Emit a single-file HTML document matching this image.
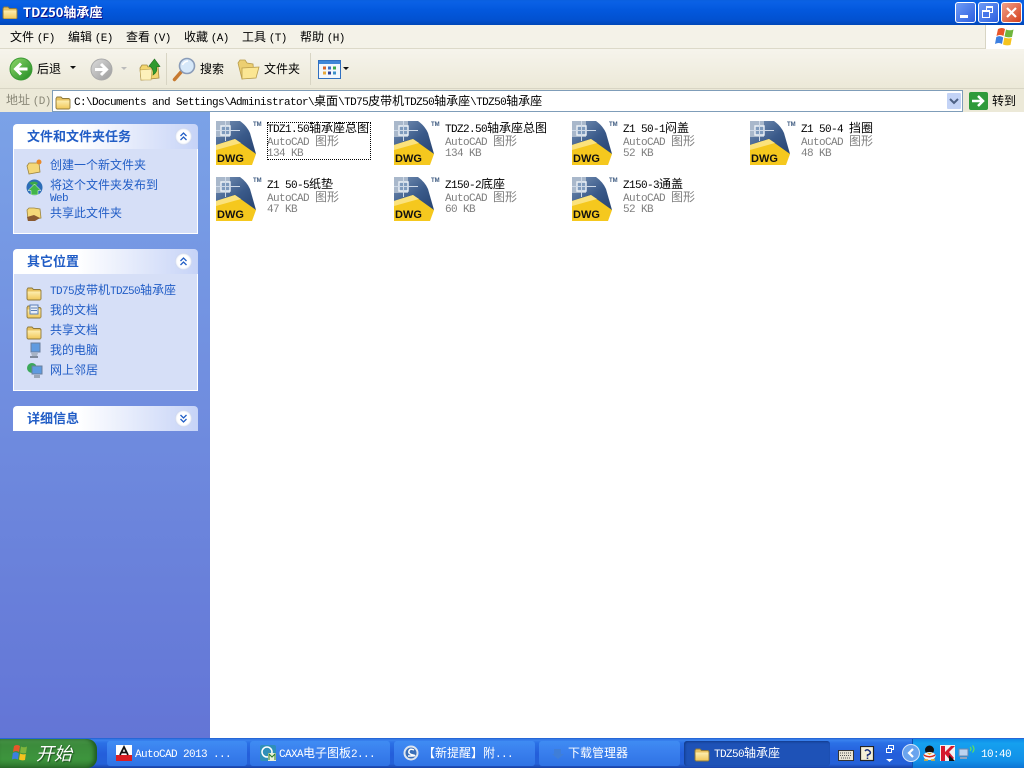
<!DOCTYPE html>
<html lang="zh"><head><meta charset="utf-8"><title>TDZ50轴承座</title>
<style>
html,body{margin:0;padding:0;width:1024px;height:768px;overflow:hidden;background:#fff}
body{position:relative;font:12px/14px "Noto Sans CJK SC","WenQuanYi Zen Hei",sans-serif;color:#000}
div,svg,span.a{position:absolute}
.t{white-space:nowrap;line-height:14px}
i{font:normal 11px/14px "Liberation Mono",monospace;letter-spacing:-.6px}
.title{left:0;top:0;width:1024px;height:25px;background:linear-gradient(#0a5fe0 0,#0a61e6 2px,#0358dd 10px,#0251d0 20px,#0047b8 25px)}
.menu{left:0;top:25px;width:1024px;height:24px;background:#f4f2e8;border-bottom:1px solid #dcd9c9;box-sizing:border-box}
.tool{left:0;top:49px;width:1024px;height:40px;background:linear-gradient(#f6f4ec,#ece9d8);border-bottom:1px solid #d8d5c4;box-sizing:border-box}
.addr{left:0;top:89px;width:1024px;height:23px;background:#ece9d8}
.side{left:0;top:112px;width:210px;height:626px;background:linear-gradient(#7ba2e7,#6375d6)}
.hd{left:13px;width:185px;height:25px;background:linear-gradient(90deg,#fff 0,#fff 35%,#c6d3f7 100%);border-radius:4px 4px 0 0}
.hd b{position:absolute;left:14px;top:4px;font-weight:700;font-size:13px;line-height:15px;color:#215dc6;white-space:nowrap}
.bd{left:13px;width:183px;background:#d6dff7;border:1px solid #fff;border-top:0}
.ch{left:162px;top:4px;width:17px;height:17px;background:#fff;border-radius:50%;box-shadow:0 0 2px #8aa0d8 inset}
.lnk{color:#215dc6;left:50px}
.n{color:#000}.g{color:#7f7f7f}
.task{left:0;top:738px;width:1024px;height:30px;background:linear-gradient(#1f5ed0 0,#3a82ee 2px,#2b70e6 5px,#245edb 16px,#2461d8 26px,#1941a5 30px)}
.tb{top:741px;height:25px;background:linear-gradient(#3f8cf3,#3a80ee 40%,#2f73e4);border-radius:3px;color:#fff}
.tb .t{position:absolute;top:5px;color:#fff}
.wb{top:2px;width:21px;height:21px;border:1px solid #fff;border-radius:3px;box-sizing:border-box}
.dw{position:absolute;left:1px;top:33px;font:700 11px/11px "Liberation Sans",sans-serif;color:#111}
.tm{position:absolute;left:37px;top:1px;font:700 6px/7px "Liberation Sans",sans-serif;color:#3d5a80}
.ic{width:52px;height:48px}
</style></head><body>

<svg width="0" height="0" style="left:0;top:0"><defs>
<linearGradient id="fg" x1="0" y1="0" x2="0" y2="1"><stop offset="0" stop-color="#fdeeb0"/><stop offset="1" stop-color="#f1c95c"/></linearGradient>
<linearGradient id="bl" x1="0" y1="0" x2="1" y2="1"><stop offset="0" stop-color="#7a94b6"/><stop offset=".55" stop-color="#3a5a8a"/><stop offset="1" stop-color="#27436f"/></linearGradient>
<symbol id="dwg" viewBox="0 0 42 45"><path d="M0 0H24Q31 5 34 12L40 33 0 30z" fill="url(#bl)"/><path d="M0 0h14v16H0z" fill="#a9b8cb"/><path d="M5 5h9v9H5z" fill="#7f9bbd" stroke="#eef3f8" stroke-width="1.400"/><path d="M9.500 0v20M0 9.500h24" stroke="#cfdae8" stroke-width="1"/><path d="M0 24 19 18 40 33 36 44H0z" fill="#f5c81e"/><path d="M0 24 19 18 25 22 0 29z" fill="#fbe27c"/></symbol>
<symbol id="fd" viewBox="0 0 16 16"><path d="M1 4.500 2 3h4l1.500 1.500H14l1 1V14l-1 1H2l-1-1z" fill="#e8c261" stroke="#8f7a3c" stroke-width=".9"/><path d="M1.500 6.500H14.500V14.500H2z" fill="url(#fg)"/></symbol>
</defs></svg>

<div class="title"></div>
<svg style="left:2px;top:5px" width="16" height="14"><use href="#fd" width="16" height="16" y="-1"/></svg>
<div class="t" style="left:23px;top:4px;color:#fff;font-weight:700;font-size:13px;line-height:15px;text-shadow:1px 1px #0f1089">TDZ50轴承座</div>
<div class="wb" style="left:955px;background:linear-gradient(135deg,#6f9bf5,#2c5fe0)"><div style="left:4px;top:12px;width:8px;height:3px;background:#fff"></div></div>
<div class="wb" style="left:978px;background:linear-gradient(135deg,#6f9bf5,#2c5fe0)"><div style="left:7px;top:3px;width:7px;height:7px;border:1px solid #fff;border-top-width:2px;box-sizing:border-box"></div><div style="left:3px;top:7px;width:8px;height:8px;border:1px solid #fff;border-top-width:2px;box-sizing:border-box;background:#4676ea"></div></div>
<div class="wb" style="left:1001px;background:linear-gradient(135deg,#f0a08a,#d5401c)"><svg style="left:3px;top:3px" width="13" height="13"><path d="M2 2 11 11M11 2 2 11" stroke="#fff" stroke-width="2.200"/></svg></div>

<div class="menu"></div>
<div class="t" style="left:10px;top:30px">文件 <i>(F)</i></div>
<div class="t" style="left:68px;top:30px">编辑 <i>(E)</i></div>
<div class="t" style="left:126px;top:30px">查看 <i>(V)</i></div>
<div class="t" style="left:184px;top:30px">收藏 <i>(A)</i></div>
<div class="t" style="left:242px;top:30px">工具 <i>(T)</i></div>
<div class="t" style="left:300px;top:30px">帮助 <i>(H)</i></div>
<div style="left:985px;top:25px;width:39px;height:24px;background:#fff;border-left:1px solid #d8d5c4;box-sizing:border-box"></div>
<svg style="left:995px;top:27px" width="20" height="19"><path d="M3 2Q7 0 10 2L8.500 9Q5 7 1.500 9z" fill="#e8562a"/><path d="M11 2.500Q15 4 18.500 2.500L17 10Q13 11 9.500 9.500z" fill="#6fb53c"/><path d="M1.300 10Q5 8 8.200 10.500L7 17Q4 15 0 17z" fill="#3c7fe0"/><path d="M9.300 10.500Q13 12 16.800 11L15.500 18Q11 19 8 17.500z" fill="#f5c31e"/></svg>

<div class="tool"></div>
<svg style="left:9px;top:57px" width="24" height="24"><defs><linearGradient id="gb" x1="0" y1="0" x2="1" y2="1"><stop offset="0" stop-color="#8fd86a"/><stop offset="1" stop-color="#1f8a22"/></linearGradient><linearGradient id="gf" x1="0" y1="0" x2="1" y2="1"><stop offset="0" stop-color="#dcdcdc"/><stop offset="1" stop-color="#9a9a9a"/></linearGradient></defs><circle cx="12" cy="12" r="11" fill="url(#gb)" stroke="#3c9a35"/><path d="M18.500 12H7M12 6.500 6.500 12 12 17.500" fill="none" stroke="#fff" stroke-width="3"/></svg>
<div class="t" style="left:37px;top:62px">后退</div>
<svg style="left:70px;top:66px" width="7" height="4"><path d="M0 0H6L3 3z" fill="#111"/></svg>
<svg style="left:90px;top:58px" width="23" height="23"><circle cx="11.500" cy="11.500" r="10.500" fill="url(#gf)" stroke="#aaa"/><path d="M5 11.500H16.500M11 6 16.500 11.500 11 17" fill="none" stroke="#fff" stroke-width="3"/></svg>
<svg style="left:121px;top:67px" width="7" height="4"><path d="M0 0H6L3 3z" fill="#bbb"/></svg>
<svg style="left:139px;top:57px" width="22" height="24"><path d="M1 11 3 8H8L9 10 19 9 20 21 2 23z" fill="#f3d670" stroke="#a58a3f" stroke-width=".8"/><path d="M1 13 13 12 12 23 2 23z" fill="#fdf1ba" stroke="#b89c4a" stroke-width=".6"/><path d="M14 18Q15 12 11 9.500L10 9 15.500 2 21 9.500 17.500 10Q19 15 14 18z" fill="#2f9a2e" stroke="#1e6e1e" stroke-width=".6"/></svg>
<div style="left:166px;top:53px;width:1px;height:32px;background:#d8d5c4"></div>
<svg style="left:172px;top:57px" width="26" height="25"><path d="M2.500 22.500 9.500 14.500" stroke="#c77a30" stroke-width="3.500" stroke-linecap="round"/><circle cx="15" cy="9" r="7.500" fill="#d6e8f9" stroke="#8a9cb8" stroke-width="1.600"/><path d="M10.500 8Q12 4.500 16 4" stroke="#fff" stroke-width="1.500" fill="none"/></svg>
<div class="t" style="left:200px;top:62px">搜索</div>
<svg style="left:236px;top:58px" width="24" height="23"><path d="M2 5 4 2H9L11 5 17 6 18 18 6 21z" fill="#eccf72" stroke="#b89c4a" stroke-width=".8"/><path d="M6 10 23 9 20 20 6 21z" fill="#fbe693" stroke="#b89c4a" stroke-width=".8"/></svg>
<div class="t" style="left:264px;top:62px">文件夹</div>
<div style="left:310px;top:53px;width:1px;height:32px;background:#d8d5c4"></div>
<svg style="left:318px;top:60px" width="24" height="20"><rect x=".5" y=".5" width="22" height="18" fill="#f2f6fc" stroke="#2f6fc0"/><rect x="1" y="1" width="21" height="3" fill="#3f86d8"/><path d="M5 6.500h3v3H5z" fill="#d8632c"/><path d="M10 6.500h3v3h-3z" fill="#3b6fc8"/><path d="M15 6.500h3v3h-3z" fill="#3ba84a"/><path d="M5 11.500h3v3H5z" fill="#e8a83c"/><path d="M10 11.500h3v3h-3z" fill="#2b3f9a"/><path d="M15 11.500h3v3h-3z" fill="#3b8fc8"/></svg>
<svg style="left:343px;top:67px" width="7" height="4"><path d="M0 0H6L3 3z" fill="#111"/></svg>

<div class="addr"></div>
<div class="t" style="left:6px;top:93px;color:#8a8878">地址 <i>(D)</i></div>
<div style="left:52px;top:90px;width:911px;height:22px;background:#fff;border:1px solid #7f9db9;box-sizing:border-box"></div>
<svg style="left:55px;top:94px" width="16" height="16"><use href="#fd" width="16" height="16"/></svg>
<div class="t" style="left:74px;top:94px"><i>C:\Documents and Settings\Administrator\</i>桌面<i>\TD75</i>皮带机<i>TDZ50</i>轴承座<i>\TDZ50</i>轴承座</div>
<div style="left:946px;top:92px;width:16px;height:18px;background:#c3d3f6;border:1px solid #fff;box-sizing:border-box;border-radius:2px"></div>
<svg style="left:949px;top:98px" width="10" height="7"><path d="M1 1 5 5 9 1" fill="none" stroke="#4d6185" stroke-width="2"/></svg>
<svg style="left:969px;top:92px" width="19" height="18"><rect width="19" height="18" rx="2" fill="#2f9a3a"/><path d="M3 9H13M9 4 14 9 9 14" fill="none" stroke="#fff" stroke-width="2.500"/></svg>
<div class="t" style="left:992px;top:94px">转到</div>

<div class="side"></div>

<div class="hd" style="top:124px"><b>文件和文件夹任务</b><div class="ch"><svg width="17" height="17"><path d="M5.500 8 8.500 5 11.500 8M5.500 12 8.500 9 11.500 12" fill="none" stroke="#215dc6" stroke-width="1.300"/></svg></div></div>
<div class="bd" style="top:149px;height:84px"></div>
<svg style="left:26px;top:158px" width="17" height="17"><path d="M1 8 3 5H8L13 5 14 14 3 16z" fill="#f5d878" stroke="#9c8540" stroke-width=".8"/><circle cx="13" cy="4" r="2.500" fill="#e88a2a"/></svg>
<div class="t lnk" style="top:158px">创建一个新文件夹</div>
<svg style="left:26px;top:179px" width="17" height="17"><circle cx="8.500" cy="8.500" r="8" fill="#2c6db8"/><path d="M3 4Q8 1 12 4L9 8z" fill="#3ba84a"/><path d="M8.500 5 15 11.500H12V16H5V11.500H2z" fill="#42b54a" stroke="#fff" stroke-width=".5"/></svg>
<div class="t lnk" style="top:178px">将这个文件夹发布到</div>
<div class="t lnk" style="top:190px"><i>Web</i></div>
<svg style="left:26px;top:206px" width="17" height="16"><path d="M1 4 3 2H8L14 3 15 12 2 14z" fill="#f5d878" stroke="#9c8540" stroke-width=".8"/><path d="M1 11 8 9 14 12 9 15 2 15z" fill="#8a5a30"/></svg>
<div class="t lnk" style="top:206px">共享此文件夹</div>

<div class="hd" style="top:249px"><b>其它位置</b><div class="ch"><svg width="17" height="17"><path d="M5.500 8 8.500 5 11.500 8M5.500 12 8.500 9 11.500 12" fill="none" stroke="#215dc6" stroke-width="1.300"/></svg></div></div>
<div class="bd" style="top:274px;height:116px"></div>
<svg style="left:26px;top:285px" width="16" height="16"><use href="#fd" width="16" height="16"/></svg>
<div class="t lnk" style="top:283px"><i>TD75</i>皮带机<i>TDZ50</i>轴承座</div>
<svg style="left:26px;top:303px" width="16" height="16"><use href="#fd" width="16" height="16"/><path d="M4 2H12V11H4z" fill="#e8eef8" stroke="#5a7fb8"/><path d="M5 5h6M5 7.500h6" stroke="#5a7fb8"/></svg>
<div class="t lnk" style="top:303px">我的文档</div>
<svg style="left:26px;top:324px" width="16" height="16"><use href="#fd" width="16" height="16"/></svg>
<div class="t lnk" style="top:323px">共享文档</div>
<svg style="left:27px;top:342px" width="15" height="17"><path d="M4 1H13V10H4z" fill="#5f9be0" stroke="#6a7f9c"/><path d="M4 11H11L10 14H5z" fill="#a8b4c4"/><path d="M3 14H11V16H3z" fill="#7f8a9c"/></svg>
<div class="t lnk" style="top:343px">我的电脑</div>
<svg style="left:26px;top:362px" width="17" height="17"><circle cx="6" cy="6" r="5" fill="#3ba85a"/><path d="M6 4H16V12H6z" fill="#5f9be0" stroke="#6a7f9c"/><path d="M8 13H14V16H8z" fill="#9aa6b8"/></svg>
<div class="t lnk" style="top:363px">网上邻居</div>

<div class="hd" style="top:406px"><b>详细信息</b><div class="ch"><svg width="17" height="17"><path d="M5.500 5 8.500 8 11.500 5M5.500 9 8.500 12 11.500 9" fill="none" stroke="#215dc6" stroke-width="1.300"/></svg></div></div>

<!-- files -->
<div class="ic" style="left:216px;top:121px"><svg width="42" height="45" style="left:0;top:0"><use href="#dwg" width="42" height="45"/></svg><span class="dw">DWG</span><span class="tm">TM</span></div>
<div class="t" style="left:267px;top:121px"><i>TDZ1.50</i>轴承座总图</div>
<div class="t g" style="left:267px;top:134px"><i>AutoCAD </i>图形</div>
<div class="t g" style="left:267px;top:145px"><i>134 KB</i></div>
<div style="left:267px;top:122px;width:104px;height:38px;border:1px dotted #000;box-sizing:border-box"></div>

<div class="ic" style="left:394px;top:121px"><svg width="42" height="45" style="left:0;top:0"><use href="#dwg" width="42" height="45"/></svg><span class="dw">DWG</span><span class="tm">TM</span></div>
<div class="t" style="left:445px;top:121px"><i>TDZ2.50</i>轴承座总图</div>
<div class="t g" style="left:445px;top:134px"><i>AutoCAD </i>图形</div>
<div class="t g" style="left:445px;top:145px"><i>134 KB</i></div>

<div class="ic" style="left:572px;top:121px"><svg width="42" height="45" style="left:0;top:0"><use href="#dwg" width="42" height="45"/></svg><span class="dw">DWG</span><span class="tm">TM</span></div>
<div class="t" style="left:623px;top:121px"><i>Z1 50-1</i>闷盖</div>
<div class="t g" style="left:623px;top:134px"><i>AutoCAD </i>图形</div>
<div class="t g" style="left:623px;top:145px"><i>52 KB</i></div>

<div class="ic" style="left:750px;top:121px"><svg width="42" height="45" style="left:0;top:0"><use href="#dwg" width="42" height="45"/></svg><span class="dw">DWG</span><span class="tm">TM</span></div>
<div class="t" style="left:801px;top:121px"><i>Z1 50-4 </i>挡圈</div>
<div class="t g" style="left:801px;top:134px"><i>AutoCAD </i>图形</div>
<div class="t g" style="left:801px;top:145px"><i>48 KB</i></div>

<div class="ic" style="left:216px;top:177px"><svg width="42" height="45" style="left:0;top:0"><use href="#dwg" width="42" height="45"/></svg><span class="dw">DWG</span><span class="tm">TM</span></div>
<div class="t" style="left:267px;top:177px"><i>Z1 50-5</i>纸垫</div>
<div class="t g" style="left:267px;top:190px"><i>AutoCAD </i>图形</div>
<div class="t g" style="left:267px;top:201px"><i>47 KB</i></div>

<div class="ic" style="left:394px;top:177px"><svg width="42" height="45" style="left:0;top:0"><use href="#dwg" width="42" height="45"/></svg><span class="dw">DWG</span><span class="tm">TM</span></div>
<div class="t" style="left:445px;top:177px"><i>Z150-2</i>底座</div>
<div class="t g" style="left:445px;top:190px"><i>AutoCAD </i>图形</div>
<div class="t g" style="left:445px;top:201px"><i>60 KB</i></div>

<div class="ic" style="left:572px;top:177px"><svg width="42" height="45" style="left:0;top:0"><use href="#dwg" width="42" height="45"/></svg><span class="dw">DWG</span><span class="tm">TM</span></div>
<div class="t" style="left:623px;top:177px"><i>Z150-3</i>通盖</div>
<div class="t g" style="left:623px;top:190px"><i>AutoCAD </i>图形</div>
<div class="t g" style="left:623px;top:201px"><i>52 KB</i></div>

<!-- taskbar -->
<div class="task"></div>
<div style="left:0;top:739px;width:97px;height:29px;background:linear-gradient(#4d9a4d,#3c8b3c 20%,#3d953d 70%,#2f752f);border-radius:0 10px 10px 0;box-shadow:inset -3px 0 4px #1f5a1f"></div>
<svg style="left:11px;top:744px" width="18" height="18"><path d="M3 2Q6 0 9 2L8 8Q5 6 2 8z" fill="#e8562a"/><path d="M10 2.500Q13 4 16 2.500L15 9Q12 10 9 8.500z" fill="#7fb53c"/><path d="M1.800 9Q5 7 7.800 9.500L7 15.500Q4 14 1 15.500z" fill="#3c7fe0"/><path d="M9 9.500Q12 11 14.800 10L14 16Q11 17 8 15.500z" fill="#f5c31e"/></svg>
<div class="t" style="left:36px;top:741px;color:#fff;font-size:18px;line-height:24px;font-style:italic;text-shadow:1px 1px 1px #1f4f1f">开始</div>

<div class="tb" style="left:107px;width:140px">
<svg style="left:9px;top:4px" width="16" height="16"><rect width="16" height="16" fill="#fff"/><rect y="10" width="16" height="6" fill="#d81e24"/><path d="M4 10 8 2 12 10M6 7.500H10" stroke="#111" stroke-width="1.800" fill="none"/></svg>
<span class="t" style="left:28px"><i>AutoCAD 2013 ...</i></span></div>
<div class="tb" style="left:250px;width:140px">
<svg style="left:10px;top:4px" width="16" height="16"><rect width="16" height="16" rx="2" fill="#2f8fb8"/><circle cx="7" cy="7" r="5" fill="none" stroke="#fff" stroke-width="1.500"/><rect x="8" y="8" width="8" height="8" fill="#e8f0d8"/><path d="M9 15V9L12 12 15 9V15" stroke="#2a7a2a" fill="none"/></svg>
<span class="t" style="left:29px"><i>CAXA</i>电子图板<i>2...</i></span></div>
<div class="tb" style="left:394px;width:141px">
<svg style="left:9px;top:4px" width="16" height="16"><circle cx="8" cy="8" r="7.500" fill="#dfe6ef"/><circle cx="8" cy="8" r="5.500" fill="#3a6fb8"/><path d="M11 5Q7 3 6 6T10 10 5 11" stroke="#fff" stroke-width="1.500" fill="none"/></svg>
<span class="t" style="left:29px">【新提醒】附<i>...</i></span></div>
<div class="tb" style="left:539px;width:141px">
<svg style="left:11px;top:4px" width="16" height="16"><path d="M4 4H11V9H14L8 14 2 9H4z" fill="#3f7ed8"/></svg>
<span class="t" style="left:29px">下载管理器</span></div>
<div class="tb" style="left:684px;width:146px;background:#1e52b7;box-shadow:inset 1px 1px 2px #123a8a">
<svg style="left:10px;top:5px" width="16" height="16"><use href="#fd" width="16" height="16"/></svg>
<span class="t" style="left:30px"><i>TDZ50</i>轴承座</span></div>

<svg style="left:838px;top:748px" width="16" height="13"><rect x=".5" y="2.500" width="15" height="10" fill="#e8e4d4" stroke="#333"/><path d="M2 5h12M2 7.500h12M3 10h10" stroke="#555" stroke-dasharray="1 1"/></svg>
<svg style="left:860px;top:746px" width="15" height="16"><rect x=".5" y=".5" width="13" height="14" fill="#f4f0d8" stroke="#222" stroke-width="1.200"/><path d="M5 5Q7 2.500 9.500 5T7.500 9V10.500M7.500 11.500V13" stroke="#1b2f7a" stroke-width="1.500" fill="none"/></svg>
<svg style="left:885px;top:745px" width="10" height="18"><rect x="3.500" y=".5" width="5" height="4" fill="none" stroke="#fff"/><rect x="1.500" y="3.500" width="5" height="4" fill="#245edb" stroke="#fff"/><path d="M1 14H8L4.500 17z" fill="#fff"/></svg>

<div style="left:912px;top:739px;width:112px;height:29px;background:linear-gradient(#0f8ae8,#15a0ef 15%,#1290e8 75%,#0d74d4);border-left:1px solid #0f4fae;box-sizing:border-box"></div>
<svg style="left:902px;top:744px" width="18" height="18"><circle cx="9" cy="9" r="8.500" fill="#6aa4ee" stroke="#d6e6fb"/><path d="M11 5 7 9 11 13" fill="none" stroke="#fff" stroke-width="2.200"/></svg>
<svg style="left:922px;top:745px" width="15" height="16"><ellipse cx="7.500" cy="5" rx="4.500" ry="4.500" fill="#111"/><ellipse cx="7.500" cy="11" rx="6" ry="4" fill="#f5f5f5"/><path d="M5 8H10L7.500 10z" fill="#f0b020"/><path d="M1.500 9Q7.500 13 13.500 9L13 11Q7.500 14 2 11z" fill="#d8261c"/><path d="M2 15H6M9 15H13" stroke="#f0b020" stroke-width="1.600"/></svg>
<svg style="left:940px;top:745px" width="15" height="16"><rect width="15" height="16" fill="#f2f2f2"/><path d="M1 1H5V7L11 1H15L9 7 14 13 11 16 5 9V16H1z" fill="#d4192c"/><path d="M9 10 15 16H9z" fill="#111"/></svg>
<svg style="left:958px;top:744px" width="18" height="16"><rect x="1" y="5" width="9" height="7" fill="#bcd3ef" stroke="#6a86ad"/><path d="M2 13H9V15H2z" fill="#8fa2bd"/><path d="M12 3Q14 5 12 7M14.500 1.500Q17.500 5 14.500 8.500" fill="none" stroke="#5fe05f" stroke-width="1.200"/></svg>
<div class="t" style="left:981px;top:746px;color:#fff"><i>10:40</i></div>
</body></html>
